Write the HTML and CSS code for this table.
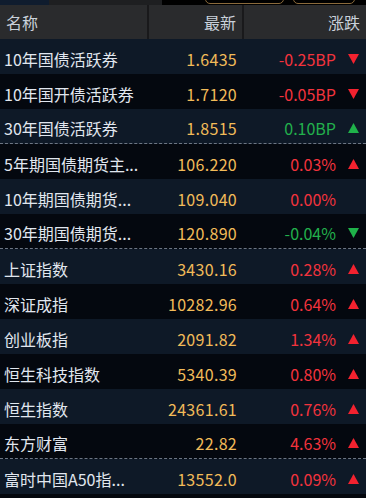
FILE: index.html
```html
<!DOCTYPE html>
<html lang="zh">
<head>
<meta charset="utf-8">
<link rel="stylesheet" href="styles.css">
</head>
<body>
<div class="topstrip">
  <div class="seg seg-blue"></div>
  <div class="seg seg-gray"></div>
  <div class="seg seg-black">
    <div class="btn btn-a"></div>
    <div class="btn btn-b"></div>
  </div>
</div>
<div class="table">
  <div class="row head">
    <div class="c name">名称</div>
    <div class="c price">最新</div>
    <div class="c chg-head">涨跌</div>
  </div>

  <div class="row light">
    <div class="c name">10年国债活跃券</div>
    <div class="c price">1.6435</div>
    <div class="c chg red">-0.25BP</div>
    <div class="c arr"><svg class="tri red-f" viewBox="0 0 11 10"><polygon points="0,0 11,0 5.5,10"/></svg></div>
  </div>
  <div class="row dark">
    <div class="c name">10年国开债活跃券</div>
    <div class="c price">1.7120</div>
    <div class="c chg red">-0.05BP</div>
    <div class="c arr"><svg class="tri red-f" viewBox="0 0 11 10"><polygon points="0,0 11,0 5.5,10"/></svg></div>
  </div>
  <div class="row light sep">
    <div class="c name">30年国债活跃券</div>
    <div class="c price">1.8515</div>
    <div class="c chg green">0.10BP</div>
    <div class="c arr"><svg class="tri green-f" viewBox="0 0 11 10"><polygon points="0,10 11,10 5.5,0"/></svg></div>
  </div>
  <div class="row dark">
    <div class="c name">5年期国债期货主...</div>
    <div class="c price">106.220</div>
    <div class="c chg red">0.03%</div>
    <div class="c arr"><svg class="tri red-f" viewBox="0 0 11 10"><polygon points="0,10 11,10 5.5,0"/></svg></div>
  </div>
  <div class="row light">
    <div class="c name">10年期国债期货...</div>
    <div class="c price">109.040</div>
    <div class="c chg red">0.00%</div>
    <div class="c arr"></div>
  </div>
  <div class="row dark sep">
    <div class="c name">30年期国债期货...</div>
    <div class="c price">120.890</div>
    <div class="c chg green">-0.04%</div>
    <div class="c arr"><svg class="tri green-f" viewBox="0 0 11 10"><polygon points="0,0 11,0 5.5,10"/></svg></div>
  </div>
  <div class="row light">
    <div class="c name">上证指数</div>
    <div class="c price">3430.16</div>
    <div class="c chg red">0.28%</div>
    <div class="c arr"><svg class="tri red-f" viewBox="0 0 11 10"><polygon points="0,10 11,10 5.5,0"/></svg></div>
  </div>
  <div class="row dark">
    <div class="c name">深证成指</div>
    <div class="c price">10282.96</div>
    <div class="c chg red">0.64%</div>
    <div class="c arr"><svg class="tri red-f" viewBox="0 0 11 10"><polygon points="0,10 11,10 5.5,0"/></svg></div>
  </div>
  <div class="row light">
    <div class="c name">创业板指</div>
    <div class="c price">2091.82</div>
    <div class="c chg red">1.34%</div>
    <div class="c arr"><svg class="tri red-f" viewBox="0 0 11 10"><polygon points="0,10 11,10 5.5,0"/></svg></div>
  </div>
  <div class="row dark">
    <div class="c name">恒生科技指数</div>
    <div class="c price">5340.39</div>
    <div class="c chg red">0.80%</div>
    <div class="c arr"><svg class="tri red-f" viewBox="0 0 11 10"><polygon points="0,10 11,10 5.5,0"/></svg></div>
  </div>
  <div class="row light">
    <div class="c name">恒生指数</div>
    <div class="c price">24361.61</div>
    <div class="c chg red">0.76%</div>
    <div class="c arr"><svg class="tri red-f" viewBox="0 0 11 10"><polygon points="0,10 11,10 5.5,0"/></svg></div>
  </div>
  <div class="row dark sep">
    <div class="c name">东方财富</div>
    <div class="c price">22.82</div>
    <div class="c chg red">4.63%</div>
    <div class="c arr"><svg class="tri red-f" viewBox="0 0 11 10"><polygon points="0,10 11,10 5.5,0"/></svg></div>
  </div>
  <div class="row light">
    <div class="c name">富时中国A50指...</div>
    <div class="c price">13552.0</div>
    <div class="c chg red">0.09%</div>
    <div class="c arr"><svg class="tri red-f" viewBox="0 0 11 10"><polygon points="0,10 11,10 5.5,0"/></svg></div>
  </div>
</div>
</body>
</html>
```

FILE: styles.css
```css
html, body {
  margin: 0;
  padding: 0;
  background: #04070d;
  width: 366px;
  height: 498px;
  overflow: hidden;
  font-family: "Noto Sans CJK SC", "Noto Sans", sans-serif;
}

.topstrip {
  display: flex;
  height: 5px;
  overflow: hidden;
}
.seg { height: 5px; }
.seg-blue { width: 49px; background: #0f1c2e; }
.seg-gray { width: 113px; background: #1e1f21; }
.seg-black {
  flex: 1;
  background: #000;
  display: flex;
  align-items: flex-end;
  padding-left: 43px;
  gap: 9px;
}
.btn {
  height: 20px;
  margin-bottom: 1px;
  border: 1px solid #8a6a3c;
  border-radius: 5px;
  box-sizing: border-box;
}
.btn-a { width: 79px; }
.btn-b { width: 62px; }

.table { display: flex; flex-direction: column; }

.row {
  display: grid;
  grid-template-columns: 147px 95px 100px 24px;
  height: 35px;
  box-sizing: border-box;
  font-size: 16px;
  align-items: center;
  padding-top: 4px;
}
.row.head {
  height: 34px;
  padding-top: 0;
  background: #2a2b2d;
  color: #c9d1db;
  grid-template-columns: 147px 95px 124px;
}
.row.light { background: #0e1927; }
.row.dark { background: #04080f; }
.row.sep { border-bottom: 1px dashed #6d7684; }

.c { white-space: nowrap; line-height: 20px; }
.name { padding-left: 4px; color: #e1e7ef; }
.head .name { padding-left: 6px; color: #c9d1db; line-height: 34px; }
.price { text-align: right; padding-right: 5px; color: #f2bb59; letter-spacing: 0.3px; }
.head .price {
  color: #c9d1db;
  padding-right: 6px;
  letter-spacing: 0;
  border-left: 2px solid #19191b;
  height: 34px;
  line-height: 34px;
  box-sizing: border-box;
}
.chg-head {
  text-align: right;
  padding-right: 6px;
  border-left: 2px solid #19191b;
  height: 34px;
  line-height: 34px;
  box-sizing: border-box;
}
.chg { text-align: right; padding-right: 6px; }
.red { color: #f3333d; }
.green { color: #22b04c; }
.arr { display: flex; align-items: center; padding-left: 6px; height: 20px; }
.tri { width: 11px; height: 10px; display: block; }
.red-f { fill: #f3222f; }
.green-f { fill: #1fb24a; }
```
